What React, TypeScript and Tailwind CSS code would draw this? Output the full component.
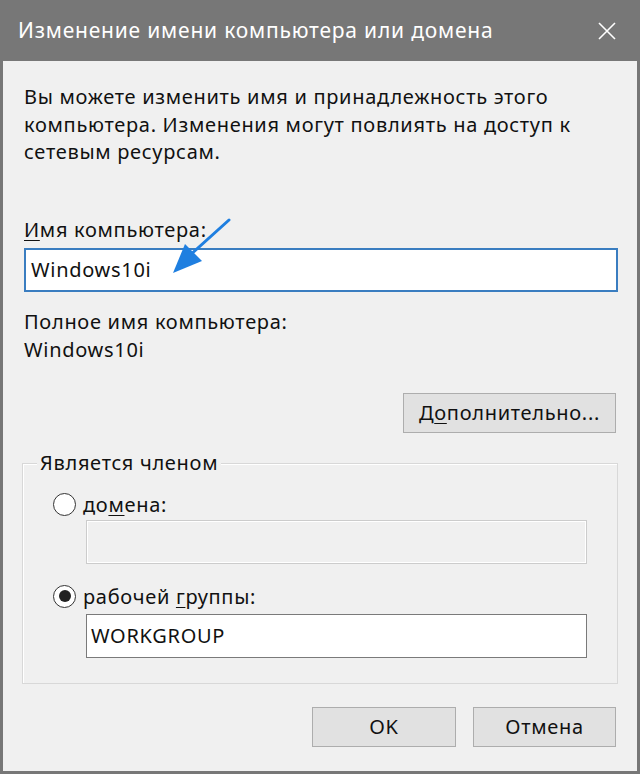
import React from "react";

const U = ({ children }: { children: React.ReactNode }) => (
  <span className="underline underline-offset-[3px] decoration-1">{children}</span>
);

function Radio({ checked }: { checked?: boolean }) {
  return (
    <span className="flex h-[23px] w-[23px] shrink-0 items-center justify-center rounded-full border border-[#333] bg-white">
      {checked && <span className="h-[12px] w-[12px] rounded-full bg-[#222]" />}
    </span>
  );
}

export default function App() {
  return (
    <div
      className="flex h-[774px] w-[640px] flex-col bg-[#777777] px-[3px] pb-[3px]"
      style={{ fontFamily: '"Noto Sans", "Open Sans", sans-serif' }}
    >
      <div className="flex h-[61px] items-center justify-between pl-[15px] pr-[20px] text-[21px] tracking-[0.8px] text-white">
        <span>Изменение имени компьютера или домена</span>
        <svg width="20" height="20" viewBox="0 0 20 20">
          <path d="M2 2 L18 18 M18 2 L2 18" stroke="#ffffff" strokeWidth="1.6" />
        </svg>
      </div>
      <div className="relative flex flex-1 flex-col bg-[#f0f0f0] pl-[21px] pr-[20px] text-[20px] leading-[27.5px] tracking-[0.7px] text-[#111]">
        <p className="mt-[22px]">
          Вы можете изменить имя и принадлежность этого
          <br />
          компьютера. Изменения могут повлиять на доступ к
          <br />
          сетевым ресурсам.
        </p>
        <div className="mt-[50px] leading-[27px]">
          <U>И</U>мя компьютера:
        </div>
        <div className="mt-[5px] flex h-[44px] w-[594px] items-center border-2 border-[#3a7dc0] bg-white pl-[5px]">
          Windows10i
        </div>
        <div className="mt-[16px] leading-[28px]">Полное имя компьютера:</div>
        <div className="leading-[28px]">Windows10i</div>
        <div className="mt-[29px] flex justify-end pr-[1px]">
          <div className="flex h-[40px] w-[213px] items-center justify-center border border-[#adadad] bg-[#e1e1e1]">
            Д<U>о</U>полнительно...
          </div>
        </div>
        <div className="relative ml-[-2px] mt-[30px] h-[221px] w-[596px] border border-[#d8d8d8] shadow-[inset_1px_1px_0_#ffffff]">
          <div className="absolute left-[14px] top-[-15px] bg-[#f0f0f0] px-[3px] leading-[27px]">
            Является членом
          </div>
          <div className="ml-[30px] mt-[27px] flex items-center gap-[7px] leading-[27px]">
            <Radio />
            <span>
              до<U>м</U>ена:
            </span>
          </div>
          <div className="ml-[63px] mt-[2px] h-[44px] w-[501px] border border-[#cccccc] bg-[#f0f0f0] shadow-[inset_0_0_0_1px_#ffffff]" />
          <div className="ml-[30px] mt-[19px] flex items-center gap-[7px] leading-[27px]">
            <Radio checked />
            <span>
              рабочей <U>г</U>руппы:
            </span>
          </div>
          <div className="ml-[63px] mt-[4px] flex h-[44px] w-[501px] items-center border border-[#7a7a7a] bg-white pl-[4px]">
            WORKGROUP
          </div>
        </div>
        <div className="mt-[23px] flex justify-end gap-[17px] pr-[1px]">
          <div className="flex h-[40px] w-[144px] items-center justify-center border border-[#adadad] bg-[#e1e1e1]">
            OK
          </div>
          <div className="flex h-[40px] w-[143px] items-center justify-center border border-[#adadad] bg-[#e1e1e1]">
            Отмена
          </div>
        </div>
        <svg
          className="absolute left-[164px] top-[155px]"
          width="70"
          height="65"
          viewBox="164 216 70 65"
        >
          <path d="M226 220 L186 256" stroke="#1f7fe0" strokeWidth="3" strokeLinecap="round" />
          <path d="M170 273 L182 244 L199 261 Z" fill="#1f7fe0" />
        </svg>
      </div>
    </div>
  );
}
